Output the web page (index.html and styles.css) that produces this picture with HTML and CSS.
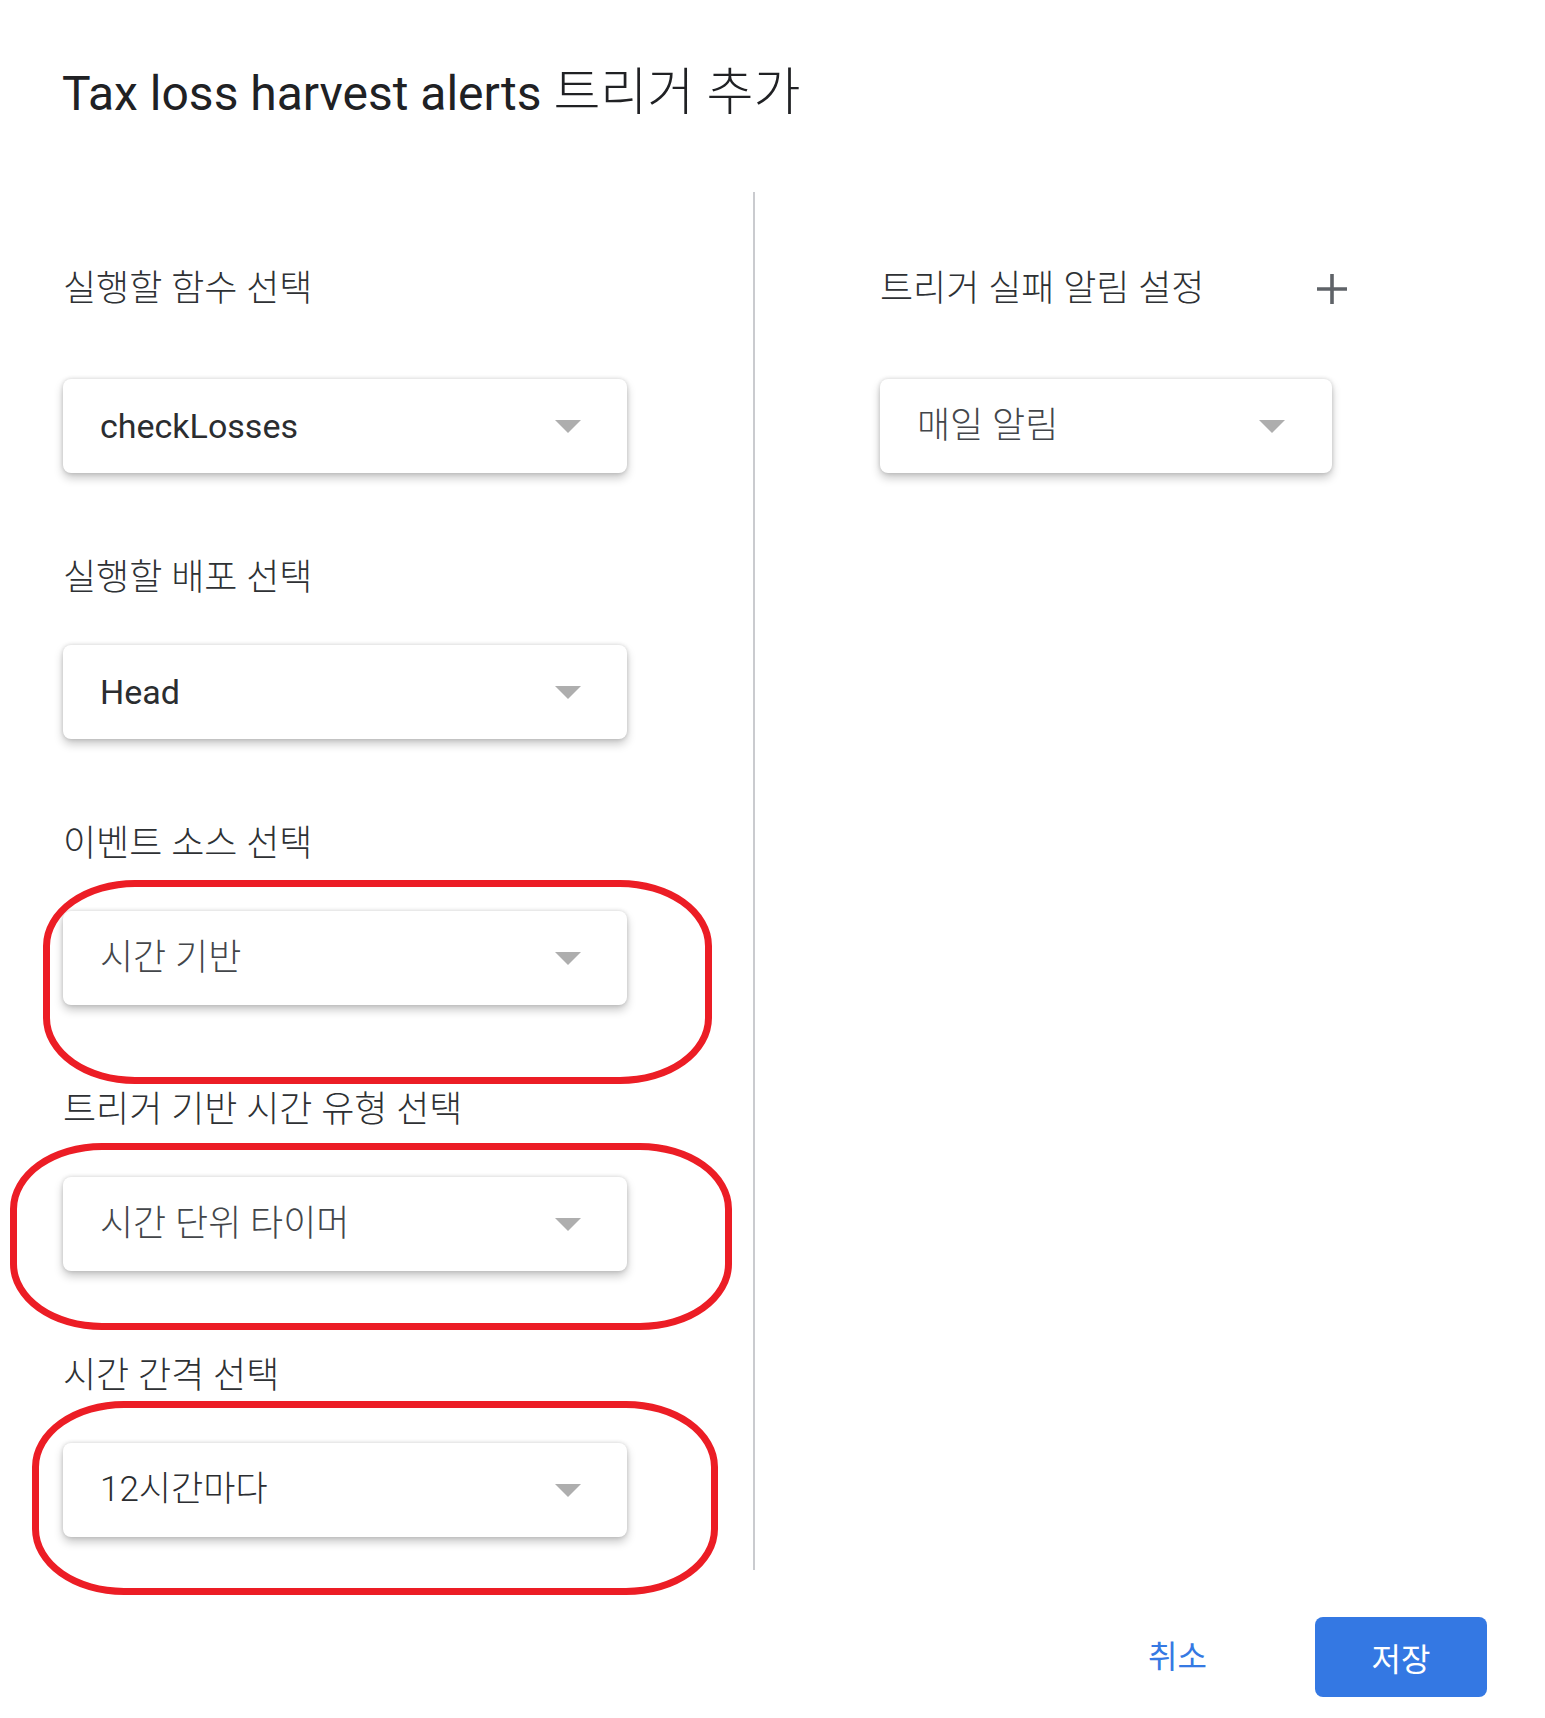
FILE: index.html
```html
<!DOCTYPE html>
<html lang="ko">

<head>
    <meta charset="UTF-8">
    <meta name="viewport" content="width=device-width, initial-scale=1.0">
    <title>트리거 추가</title>
    <link rel="stylesheet" href="styles.css">
</head>

<body>
    <div class="dialog">
        <h1 class="title">Tax loss harvest alerts <span class="title-ko">트리거 추가</span></h1>

        <div class="columns">
            <div class="col col-left">
                <div class="field field-first">
                    <div class="label">실행할 함수 선택</div>
                    <div class="select">
                        <span class="value value-latin">checkLosses</span>
                        <span class="arrow"></span>
                    </div>
                </div>

                <div class="field">
                    <div class="label">실행할 배포 선택</div>
                    <div class="select">
                        <span class="value value-latin">Head</span>
                        <span class="arrow"></span>
                    </div>
                </div>

                <div class="field">
                    <div class="label">이벤트 소스 선택</div>
                    <div class="select">
                        <span class="value">시간 기반</span>
                        <span class="arrow"></span>
                        <span class="mark mark-1"></span>
                    </div>
                </div>

                <div class="field">
                    <div class="label">트리거 기반 시간 유형 선택</div>
                    <div class="select">
                        <span class="value">시간 단위 타이머</span>
                        <span class="arrow"></span>
                        <span class="mark mark-2"></span>
                    </div>
                </div>

                <div class="field">
                    <div class="label">시간 간격 선택</div>
                    <div class="select">
                        <span class="value value-mixed">12시간마다</span>
                        <span class="arrow"></span>
                        <span class="mark mark-3"></span>
                    </div>
                </div>
            </div>

            <div class="divider"></div>

            <div class="col col-right">
                <div class="field field-first">
                    <div class="label-row">
                        <div class="label">트리거 실패 알림 설정</div>
                        <button class="add-btn" title="추가">
                            <svg width="34" height="34" viewBox="0 0 34 34">
                                <path d="M17 2v30M2 17h30" stroke="#5f6368" stroke-width="3.6" fill="none" />
                            </svg>
                        </button>
                    </div>
                    <div class="select select-narrow">
                        <span class="value">매일 알림</span>
                        <span class="arrow"></span>
                    </div>
                </div>
            </div>
        </div>

        <div class="footer">
            <button class="btn btn-cancel">취소</button>
            <button class="btn btn-save">저장</button>
        </div>
    </div>
</body>

</html>
```

FILE: styles.css
```css
* {
    margin: 0;
    padding: 0;
    box-sizing: border-box;
}

body {
    font-family: Roboto, "Noto Sans CJK KR", sans-serif;
    background: #fff;
    color: #3c4043;
}

.dialog {
    width: 1545px;
    height: 1718px;
    display: flex;
    flex-direction: column;
}

.title {
    margin: 65px 0 70px 62px;
    font-size: 48px;
    line-height: 56px;
    font-weight: 400;
    color: #202124;
}

.title-ko {
    font-size: 51px;
    font-weight: 300;
}

.columns {
    display: flex;
    height: 1378px;
}

.col-left {
    width: 753px;
    padding: 0 0 0 63px;
}

.col-right {
    padding-left: 125px;
}

.divider {
    width: 2px;
    background: #cacbcf;
}

.field {
    margin-top: 85px;
}

.field-first {
    margin-top: 77px;
}

.label {
    font-size: 36px;
    font-weight: 300;
    line-height: 40px;
    color: #2e3134;
    margin-bottom: 47px;
}

.field-first .label {
    margin-bottom: 70px;
}

.label-row {
    display: flex;
    justify-content: space-between;
    align-items: flex-start;
    width: 469px;
}

.add-btn {
    border: none;
    background: none;
    width: 34px;
    height: 40px;
    display: flex;
    align-items: center;
    cursor: pointer;
}

.select {
    position: relative;
    width: 564px;
    height: 94px;
    display: flex;
    align-items: center;
    justify-content: space-between;
    padding: 0 46px 0 37px;
    background: #fff;
    border-radius: 8px;
    box-shadow: 0 0 4px rgba(0, 0, 0, 0.16), 0 5px 10px rgba(0, 0, 0, 0.22);
}

.select-narrow {
    width: 452px;
    padding-right: 47px;
}

.value {
    font-size: 36px;
    font-weight: 300;
    line-height: 40px;
    color: #43464a;
}

.value-latin {
    font-size: 34px;
    font-weight: 400;
    color: #2b2d30;
}

.value-mixed {
    font-size: 35px;
    color: #2b2d30;
}

.arrow {
    width: 0;
    height: 0;
    border-left: 13.5px solid transparent;
    border-right: 13.5px solid transparent;
    border-top: 13.5px solid #aeaeae;
}

/* red annotation rings */
.mark {
    position: absolute;
    border: 7px solid #ec1d25;
    border-radius: 92px / 66px;
    pointer-events: none;
}

.mark-1 {
    top: -31px;
    left: -20px;
    right: -85px;
    bottom: -79px;
}

.mark-2 {
    top: -34px;
    left: -53px;
    right: -105px;
    bottom: -59px;
}

.mark-3 {
    top: -42px;
    left: -31px;
    right: -91px;
    bottom: -58px;
}

.footer {
    margin-top: 47px;
    display: flex;
    justify-content: flex-end;
    align-items: center;
    gap: 108px;
    padding-right: 58px;
}

.btn {
    border: none;
    font-family: Roboto, "Noto Sans CJK KR", sans-serif;
    font-size: 32px;
    cursor: pointer;
}

.btn-cancel {
    background: none;
    color: #3579e3;
    line-height: 80px;
}

.btn-save {
    width: 172px;
    height: 80px;
    background: #3478e3;
    color: #fff;
    border-radius: 8px;
}
```
